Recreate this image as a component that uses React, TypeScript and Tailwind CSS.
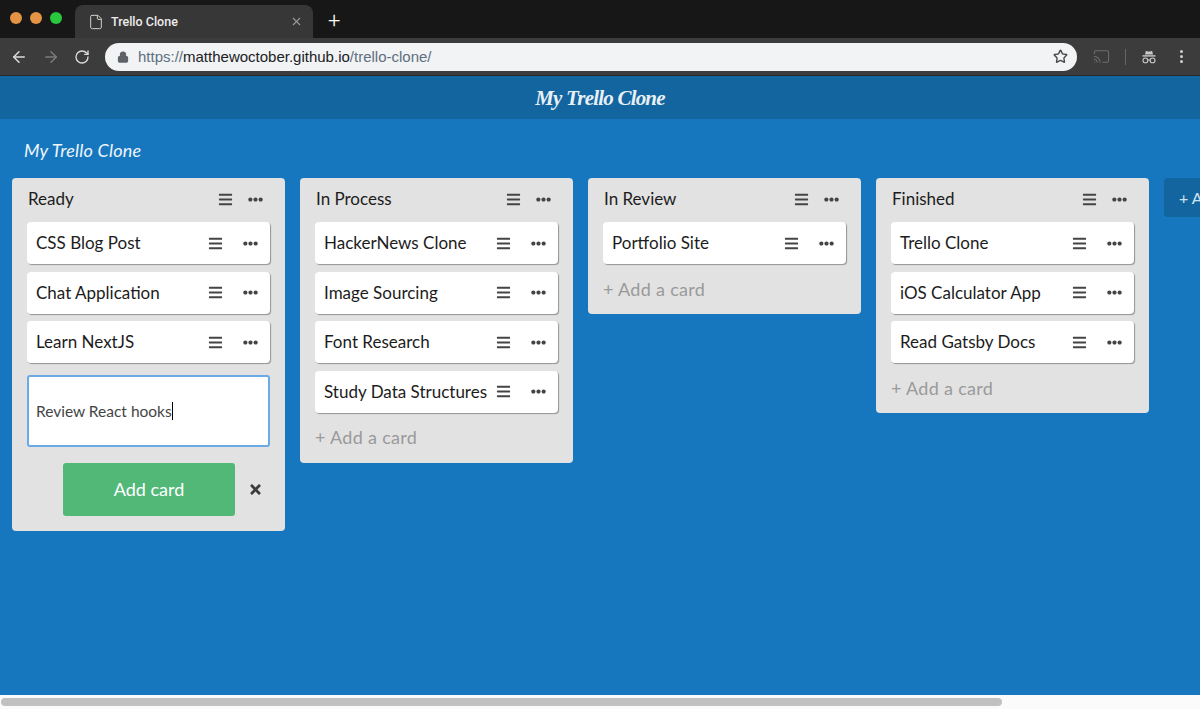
import { ArrowLeft, ArrowRight, Cast, File, Lock, RotateCw, Star, X } from "lucide-react";
import { FaBars, FaEllipsisH, FaTimes } from "react-icons/fa";

const LISTS = [
  { title: "Ready", cards: ["CSS Blog Post", "Chat Application", "Learn NextJS"], adding: true },
  { title: "In Process", cards: ["HackerNews Clone", "Image Sourcing", "Font Research", "Study Data Structures"] },
  { title: "In Review", cards: ["Portfolio Site"] },
  { title: "Finished", cards: ["Trello Clone", "iOS Calculator App", "Read Gatsby Docs"] },
];

function Incognito() {
  return (
    <svg width="14" height="14" viewBox="0 0 14 14" fill="none" className="text-[#c9c9c9]">
      <path d="M3 4.6 L3.9 0.8 L5.6 1.5 L8.4 1.5 L10.1 0.8 L11 4.6 Z" fill="currentColor" />
      <rect x="0.5" y="5.2" width="13" height="1.4" fill="currentColor" />
      <circle cx="3.4" cy="10.4" r="2.4" stroke="currentColor" strokeWidth="1.1" />
      <circle cx="10.6" cy="10.4" r="2.4" stroke="currentColor" strokeWidth="1.1" />
      <path d="M5.8 10 H8.2" stroke="currentColor" strokeWidth="1.1" />
    </svg>
  );
}

function BrowserChrome() {
  return (
    <div className="shrink-0 font-['Roboto',sans-serif]">
      <div className="flex h-[38px] items-end bg-[#171717]">
        <div className="flex h-full w-[75px] items-center gap-[8px] pl-[10px] pb-[2px]">
          <span className="size-[12px] rounded-full bg-[#e59345]" />
          <span className="size-[12px] rounded-full bg-[#e59345]" />
          <span className="size-[12px] rounded-full bg-[#2ac83e]" />
        </div>
        <div className="flex h-[33px] w-[238px] items-center rounded-t-[8px] bg-[#373737] pl-[13px] pr-[10px]">
          <File size={16} strokeWidth={1.5} className="text-[#d0d0d0]" />
          <span className="ml-[7px] flex-1 pt-[2px] text-[12.5px] font-medium text-[#ececec]">Trello Clone</span>
          <X size={13} strokeWidth={2} className="text-[#9a9a9a]" />
        </div>
        <span className="mb-[4px] ml-[15px] text-[22px] leading-[26px] font-light text-white">+</span>
      </div>
      <div className="flex h-[38px] items-center border-b border-[#26292c] bg-[#3c3c3c]">
        <div className="flex w-[105px] items-center gap-[14px] pl-[10px]">
          <ArrowLeft size={18} strokeWidth={2} className="text-[#dcdcdc]" />
          <ArrowRight size={18} strokeWidth={2} className="text-[#7b7b7b]" />
          <RotateCw size={16} strokeWidth={2} className="text-[#dcdcdc]" />
        </div>
        <div className="flex h-[28px] w-[972px] items-center rounded-full bg-[#f1f3f4] pl-[12px] pr-[9px]">
          <Lock size={12} strokeWidth={2.5} fill="currentColor" className="text-[#5f6368]" />
          <span className="ml-[9px] flex-1 pt-[2px] font-['Liberation_Sans',sans-serif] text-[15px] text-[#5f6f80]">
            https://<span className="text-[#202124]">matthewoctober.github.io</span>/trello-clone/
          </span>
          <Star size={15} strokeWidth={2.25} className="text-[#4a4a4a]" />
        </div>
        <div className="flex flex-1 items-center pl-[16px]">
          <Cast size={17} strokeWidth={1.5} className="text-[#6e6e6e]" />
          <span className="ml-[15px] h-[16px] w-px bg-[#666666]" />
          <span className="ml-[16px]"><Incognito /></span>
          <span className="ml-[24px] flex flex-col gap-[2px]">
            <span className="size-[3px] rounded-full bg-[#cfcfcf]" />
            <span className="size-[3px] rounded-full bg-[#cfcfcf]" />
            <span className="size-[3px] rounded-full bg-[#cfcfcf]" />
          </span>
        </div>
      </div>
    </div>
  );
}

function Card({ title }: { title: string }) {
  return (
    <div className="flex h-[42px] items-center rounded-[4px] bg-white pl-[9px] shadow-[1px_1px_1px_rgba(0,0,0,0.35)]">
      <span className="flex-1 text-[17px] whitespace-nowrap text-[#1c1c1c]">{title}</span>
      <FaBars size={15} className="text-[#444444]" />
      <FaEllipsisH size={15} className="mr-[12px] ml-[20px] text-[#444444]" />
    </div>
  );
}

function AddForm() {
  return (
    <>
      <div className="mt-[12px] flex h-[72px] items-center rounded-[3px] border-2 border-[#6aaae6] bg-white pl-[7px]">
        <span className="pt-[2px] text-[15.5px] text-[#444444]">Review React hooks</span>
        <span className="h-[18px] w-px bg-black" />
      </div>
      <div className="mt-[16px] flex items-center pl-[36px]">
        <div className="flex h-[53px] w-[172px] items-center justify-center rounded-[3px] bg-[#52b877] text-[18px] text-white">
          Add card
        </div>
        <FaTimes size={15} className="ml-[13px] text-[#3c3c3c]" />
      </div>
      <div className="h-[15px]" />
    </>
  );
}

function List({ title, cards, adding }: { title: string; cards: string[]; adding?: boolean }) {
  return (
    <div className="w-[273px] shrink-0 rounded-[4px] bg-[#e2e2e2] px-[15px]">
      <div className="flex h-[44px] items-center pb-[2px] pl-px">
        <span className="flex-1 text-[17px] text-[#1c1c1c]">{title}</span>
        <FaBars size={15} className="text-[#444444]" />
        <FaEllipsisH size={15} className="mr-[7px] ml-[15px] text-[#444444]" />
      </div>
      <div className="flex flex-col gap-[7.5px]">
        {cards.map((c) => (
          <Card key={c} title={c} />
        ))}
      </div>
      {adding ? (
        <AddForm />
      ) : (
        <div className="flex h-[50px] items-center text-[18px] tracking-[0.3px] text-[#9a9a9a]">+ Add a card</div>
      )}
    </div>
  );
}

export default function App() {
  return (
    <div className="flex h-[709px] w-[1200px] flex-col overflow-hidden bg-[#1677bf] font-['Lato',sans-serif]">
      <BrowserChrome />
      <header className="flex h-[43px] shrink-0 items-center justify-center bg-[#13659f] pt-[2px] font-['Liberation_Serif',serif] text-[21px] font-bold tracking-[-0.8px] text-[#e8f0f6] italic">
        My Trello Clone
      </header>
      <div className="flex min-h-0 flex-1 flex-col overflow-hidden">
        <div className="flex h-[59px] shrink-0 items-center pt-[4px] pl-[24px] text-[18px] tracking-[0.2px] text-[#eef5fb] italic">
          My Trello Clone
        </div>
        <div className="flex items-start gap-[15px] pl-[12px]">
          {LISTS.map((l) => (
            <List key={l.title} title={l.title} cards={l.cards} adding={l.adding} />
          ))}
          <div className="flex h-[39px] w-[120px] shrink-0 items-center rounded-[4px] bg-[#13659f] pl-[15px] text-[16px] whitespace-nowrap text-[#cfe2f0]">
            + Add a list
          </div>
        </div>
      </div>
      <div className="flex h-[14px] shrink-0 items-center bg-[#fbfbfb] pl-px">
        <div className="h-[8px] w-[1001px] rounded-full bg-[#c1c1c1]" />
      </div>
    </div>
  );
}
